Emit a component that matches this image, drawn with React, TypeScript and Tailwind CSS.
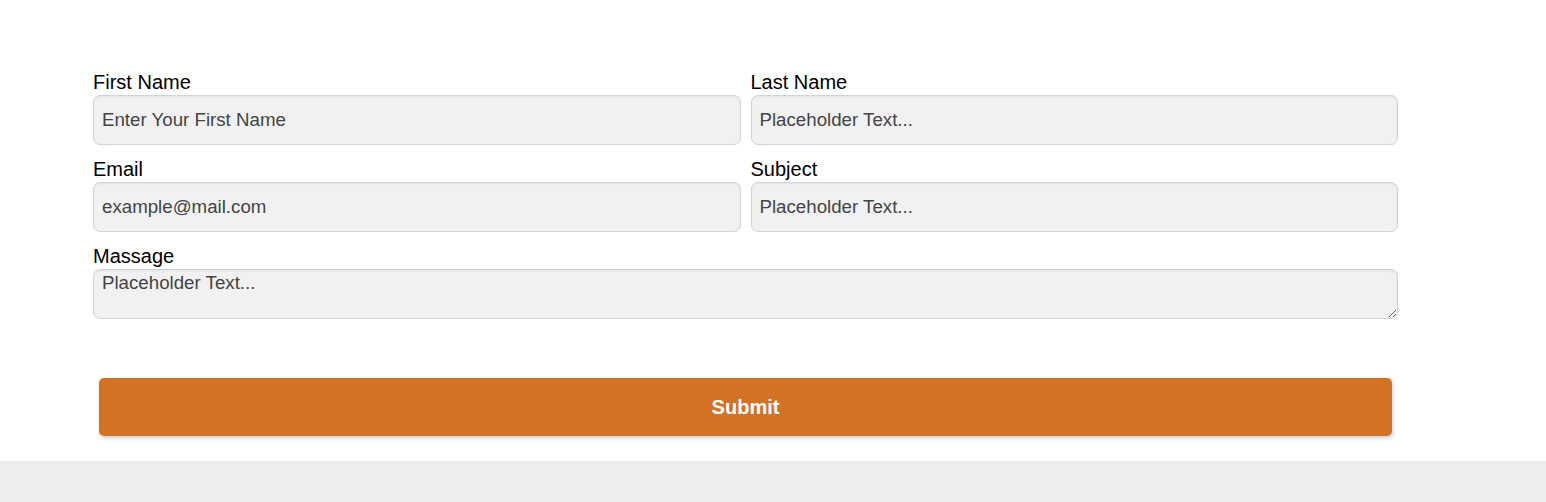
import type { ReactNode } from 'react';

const fieldClass =
  'h-[50px] w-full rounded-[7px] border border-[#cbd5df] bg-[#f1f1f1] px-2 text-[18.7px] text-[#333] placeholder:text-[#444] outline-none shadow-[inset_0_1px_2px_rgba(0,0,0,0.06)]';

function Field({ label, children }: { label: string; children: ReactNode }) {
  return (
    <div className="flex flex-col">
      <label className="h-[25px] text-[20px] leading-[25px] text-black">{label}</label>
      {children}
    </div>
  );
}

export default function App() {
  return (
    <div className="min-h-screen bg-white font-['Liberation_Sans',Arial,sans-serif]">
      <section className="pt-[70px] pb-[25px]">
        <form className="ml-[93px] w-[1305px]" onSubmit={(e) => e.preventDefault()}>
          <div className="grid grid-cols-2 gap-x-[10px] gap-y-[12px]">
            <Field label="First Name">
              <input className={fieldClass} placeholder="Enter Your First Name" />
            </Field>
            <Field label="Last Name">
              <input className={fieldClass} placeholder="Placeholder Text..." />
            </Field>
            <Field label="Email">
              <input className={fieldClass} placeholder="example@mail.com" />
            </Field>
            <Field label="Subject">
              <input className={fieldClass} placeholder="Placeholder Text..." />
            </Field>
            <div className="col-span-2">
              <Field label="Massage">
                <textarea
                  className={`${fieldClass} block resize-y pt-[2px] leading-[22px]`}
                  placeholder="Placeholder Text..."
                />
              </Field>
            </div>
          </div>
          <div className="mt-[59px] px-[6px]">
            <button
              type="submit"
              className="h-[58px] w-full rounded-[5px] bg-[#d37225] text-[20px] font-bold text-white shadow-[1px_2px_4px_rgba(0,0,0,0.2)]"
            >
              Submit
            </button>
          </div>
        </form>
      </section>
      <footer className="h-[60px] bg-[#eeeeee]" />
    </div>
  );
}
